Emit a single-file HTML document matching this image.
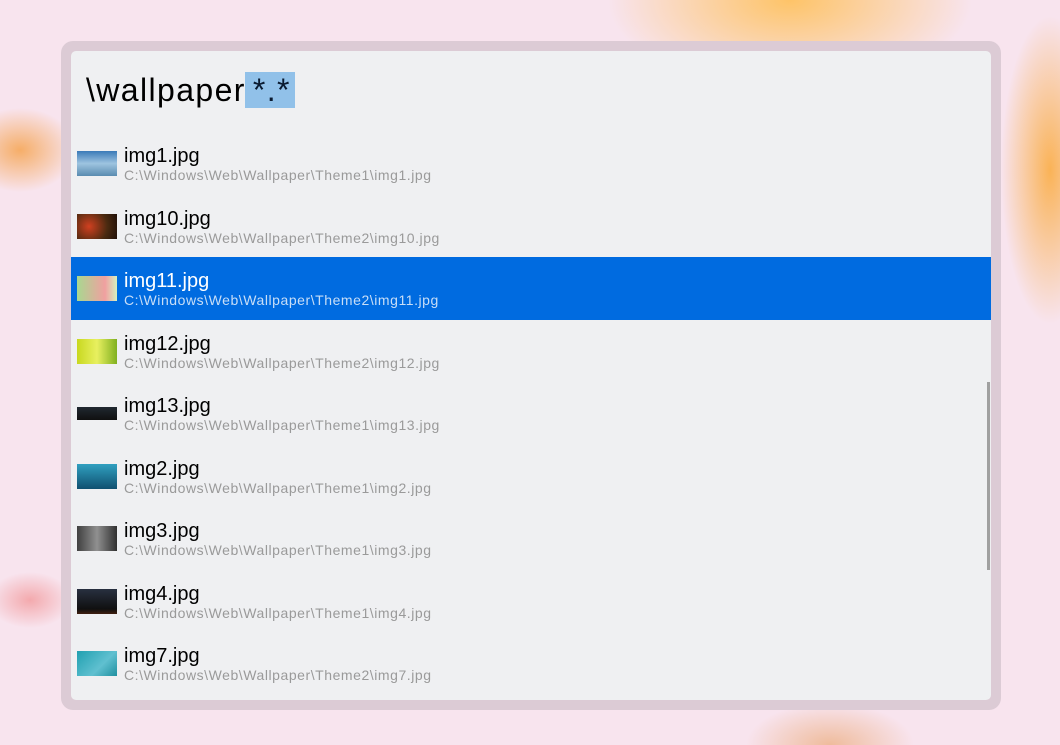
<!DOCTYPE html>
<html><head><meta charset="utf-8"><style>
*{margin:0;padding:0;box-sizing:border-box}
body{width:1060px;height:745px;overflow:hidden;position:relative;font-family:"Liberation Sans",sans-serif;
background:
radial-gradient(ellipse 260px 130px at 790px 0px,rgba(255,190,80,.85),rgba(255,190,80,0) 70%),
radial-gradient(ellipse 70px 220px at 1050px 170px,rgba(250,170,60,.85),rgba(250,170,60,0) 70%),
radial-gradient(ellipse 80px 60px at 20px 150px,rgba(245,160,70,.8),rgba(245,160,70,0) 70%),
radial-gradient(ellipse 60px 40px at 30px 600px,rgba(240,130,130,.6),rgba(240,130,130,0) 70%),
radial-gradient(ellipse 120px 60px at 830px 745px,rgba(235,170,120,.7),rgba(235,170,120,0) 70%),
#f8e4ee}
.frame{position:absolute;left:61px;top:41px;width:940px;height:669px;border-radius:12px;background:#dccbd5}
.panel{position:absolute;left:71px;top:51px;width:920px;height:649px;border-radius:5px;background:#eff0f2;overflow:hidden}
.q{position:absolute;left:15px;top:19px;font-size:32px;line-height:40px;color:#000;letter-spacing:1.4px;white-space:nowrap}
.q span{background:#91c1e9;color:#0a1a30;padding:0 4px 0 8px;margin-left:-1px}
.row{position:absolute;left:0;width:920px;height:63px}
.row.sel{background:#006be0}
.th{position:absolute;left:6px;top:19px;width:40px;height:25px}
.n{position:absolute;left:53px;top:12px;font-size:20px;line-height:24px;color:#000}
.p{position:absolute;left:53px;top:35px;font-size:14px;line-height:17px;color:#9a9a9a;letter-spacing:.55px}
.sel .n{color:#fff}.sel .p{color:#c8def7}
.sb{position:absolute;left:916px;top:331px;width:3px;height:188px;background:#a0a0a0}
</style></head><body>
<div class="frame"></div>
<div class="panel">
<div class="q">\wallpaper<span>*.*</span></div>
<div class="row" style="top:81px"><div class="th" style="background:linear-gradient(#3a7ab8,#9ec4e0 50%,#5a8cb0)"></div><div class="n">img1.jpg</div><div class="p">C:\Windows\Web\Wallpaper\Theme1\img1.jpg</div></div>
<div class="row" style="top:144px"><div class="th" style="background:radial-gradient(circle at 30% 50%,#d04020,#4a2a10 60%,#201008)"></div><div class="n">img10.jpg</div><div class="p">C:\Windows\Web\Wallpaper\Theme2\img10.jpg</div></div>
<div class="row sel" style="top:206px"><div class="th" style="background:linear-gradient(90deg,#a8d890,#f0a0a0 70%,#d8f0c0)"></div><div class="n">img11.jpg</div><div class="p">C:\Windows\Web\Wallpaper\Theme2\img11.jpg</div></div>
<div class="row" style="top:269px"><div class="th" style="background:linear-gradient(90deg,#c8d820,#e8f060 50%,#80b020)"></div><div class="n">img12.jpg</div><div class="p">C:\Windows\Web\Wallpaper\Theme2\img12.jpg</div></div>
<div class="row" style="top:331px"><div class="th" style="top:25px;height:13px;background:linear-gradient(#202830,#101010)"></div><div class="n">img13.jpg</div><div class="p">C:\Windows\Web\Wallpaper\Theme1\img13.jpg</div></div>
<div class="row" style="top:394px"><div class="th" style="background:linear-gradient(#30a0c0,#105070)"></div><div class="n">img2.jpg</div><div class="p">C:\Windows\Web\Wallpaper\Theme1\img2.jpg</div></div>
<div class="row" style="top:456px"><div class="th" style="background:linear-gradient(90deg,#404040,#909090 50%,#303030)"></div><div class="n">img3.jpg</div><div class="p">C:\Windows\Web\Wallpaper\Theme1\img3.jpg</div></div>
<div class="row" style="top:519px"><div class="th" style="background:linear-gradient(#283040,#101010 80%,#402010)"></div><div class="n">img4.jpg</div><div class="p">C:\Windows\Web\Wallpaper\Theme1\img4.jpg</div></div>
<div class="row" style="top:581px"><div class="th" style="background:linear-gradient(135deg,#20a0b0,#60c0d0 60%,#2090a0)"></div><div class="n">img7.jpg</div><div class="p">C:\Windows\Web\Wallpaper\Theme2\img7.jpg</div></div>
<div class="sb"></div>
</div>
</body></html>
